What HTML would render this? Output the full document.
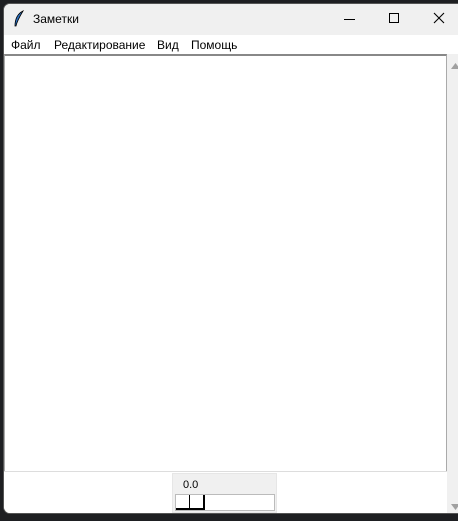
<!DOCTYPE html>
<html><head><meta charset="utf-8"><style>
*{margin:0;padding:0;box-sizing:border-box}
body{width:458px;height:521px;background:#1e1f22;position:relative;overflow:hidden;font-family:"Liberation Sans","DejaVu Sans",sans-serif;font-size:12px;color:#000}
.win{position:absolute;left:3px;top:3px;width:460px;height:511px;background:#fff;border-radius:7px 0 0 7px;overflow:hidden;border:1px solid #555}
.title{position:absolute;left:0;top:0;width:100%;height:31px;background:#f0f0f0}
.title .t{position:absolute;left:29px;top:8px;font-size:12px}
.menu{position:absolute;left:0;top:31px;width:100%;height:20px;background:#fff}
.menu span{position:absolute;top:3px;font-size:12px}
.text{position:absolute;left:0;top:50px;width:443px;height:418px;border:1px solid #aaa;border-top:2px solid #888;background:#fff}
.sb{position:absolute;left:443px;top:50px;width:17px;height:461px;background:#f0f0f0}
.bot{position:absolute;left:0;top:467px;width:443px;height:44px;background:#fff;border-top:1px solid #ddd}
.st{position:absolute;left:168px;top:469px;width:105px;height:40px;background:#f0f0f0;border:1px solid #e6e6e6}
.st .v{position:absolute;left:10px;top:5px;font-size:11px}
.st .p{position:absolute;left:2px;top:20px;width:100px;height:17px;background:#fff;border:1px solid #bbb}
</style></head><body>
<div class="win">
<div class="title">
<svg style="position:absolute;left:9px;top:6px" width="12" height="18" viewBox="0 0 12 18"><path d="M10 1 C4 4 2 10 2 16 L3 16 C4 11 7 6 10 1Z" fill="#2a6fc0" stroke="#000" stroke-width="0.8"/></svg>
<span class="t">Заметки</span>
<div style="position:absolute;left:340px;top:15px;width:11px;height:1px;background:#000"></div>
<div style="position:absolute;left:385px;top:9px;width:10px;height:10px;border:1px solid #000"></div>
<svg style="position:absolute;left:429px;top:8px" width="12" height="12"><path d="M1 1L11 11M11 1L1 11" stroke="#000" stroke-width="1.1"/></svg>
</div>
<div class="menu">
<span style="left:7px">Файл</span><span style="left:50px">Редактирование</span><span style="left:153px">Вид</span><span style="left:187px">Помощь</span>
</div>
<div class="text"></div>
<div class="sb"><svg style="position:absolute;left:4px;top:9px" width="9" height="6"><path d="M0 6L4.5 0L9 6Z" fill="#a0a0a0"/></svg>
<svg style="position:absolute;left:4px;top:450px" width="9" height="6"><path d="M0 0L4.5 6L9 0Z" fill="#a0a0a0"/></svg></div>
<div class="bot"></div>
<div class="st"><span class="v">0.0</span><div class="p">
<div style="position:absolute;left:0;top:0;width:14px;height:15px;border-right:1px solid #000;border-bottom:2px solid #000"></div>
<div style="position:absolute;left:14px;top:0;width:15px;height:15px;border-right:2px solid #000;border-bottom:2px solid #000"></div>
</div></div>
</div>
</body></html>
